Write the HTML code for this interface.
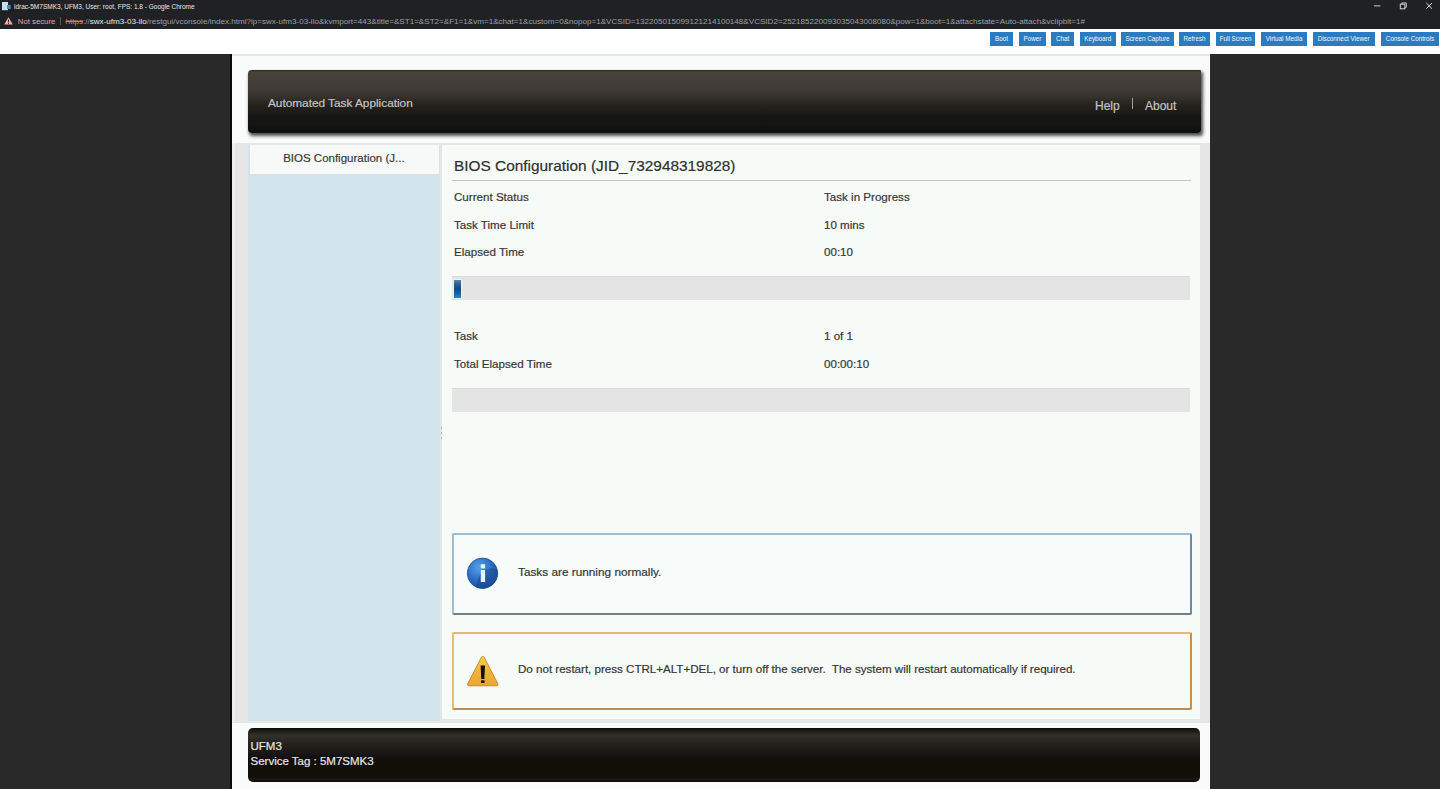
<!DOCTYPE html>
<html><head><meta charset="utf-8">
<style>
*{margin:0;padding:0;box-sizing:border-box}
html,body{width:1440px;height:789px;overflow:hidden;background:#292929;font-family:"Liberation Sans",sans-serif}
.abs{position:absolute}
#chrome{left:0;top:0;width:1440px;height:29px;background:#202124}
#titletxt{left:14px;top:2px;font-size:6.5px;color:#e8eaed;white-space:pre;line-height:9px}
#urlrow{left:0;top:15px;height:14px;width:1440px}
.url{font-size:7px;white-space:pre;line-height:14px;top:0}
#toolbar{left:0;top:29px;width:1440px;height:25px;background:#fff}
.btn{top:32px;height:14px;background:#2a7bc1;color:#f4f9ff;font-size:6.3px;line-height:14px;text-align:center;white-space:pre}
#console{left:232px;top:54px;width:978px;height:735px;background:#f8fbf9}
#lborder{left:230px;top:54px;width:2px;height:735px;background:#0a0a0a}
#header{left:247.5px;top:69.5px;width:953px;height:63.5px;border-radius:4px 1px 3px 4px;
 background:linear-gradient(to bottom,#2a2622 0,#4a4238 3%,#46403a 14%,#403c37 28%,#38342f 40%,#2c2824 50%,#231f1b 60%,#1e1a15 68%,#171617 73%,#111516 77%,#1a1612 84%,#121213 90%,#0d0e0e 100%);
 box-shadow:1.5px 2.5px 3.5px rgba(0,0,0,0.7)}
.htxt{color:#c4c4c4;font-size:11.8px;white-space:pre;-webkit-text-stroke:0.2px #c4c4c4}
#band{left:232px;top:143px;width:978px;height:580px;background:#e6e6e6}
#sidebar{left:248.3px;top:144.5px;width:191.3px;height:576.5px;background:#d3e5ec}
#tab{left:249.7px;top:144.5px;width:189.6px;height:30px;border-bottom:1px solid #d9e0e2;background:#f6f9f7;color:#3a3a3a;font-size:11.5px;text-align:center;line-height:27px;padding-right:1.2px;-webkit-text-stroke:0.2px #3a3a3a}
#content{left:442px;top:145px;width:758px;height:574px;background:#f7fbf8}
#title{left:454px;top:157.3px;font-size:15.4px;color:#303030;white-space:pre;-webkit-text-stroke:0.2px #303030}
#uline{left:452px;top:180.2px;width:739px;height:1.2px;background:#c3c5c5}
.lbl{font-size:11.6px;color:#363636;white-space:pre;-webkit-text-stroke:0.2px #363636}
.bar{left:452px;width:738px;height:23.5px;background:#e4e4e4;border-top:1.5px solid #dadada}
#footer{left:247.5px;top:728px;width:952.5px;height:54.2px;border-radius:5px;
 background:linear-gradient(to bottom,#0a0a08 0,#1a1815 4%,#33302b 14%,#22211e 30%,#1c1a12 43%,#15141a 50%,#110f08 58%,#110f08 91%,#1a1913 95%,#080806 100%)}
.ftxt{color:#e6e6e6;font-size:11.5px;white-space:pre;-webkit-text-stroke:0.2px #e6e6e6}
#info{left:452px;top:533px;width:739.5px;height:81.5px;border:2px solid #9fbcd5;border-right-color:#6a8cab;border-bottom-color:#6e808c;border-radius:2px;background:#f7fbf9}
#warn{left:452px;top:631.5px;width:739.5px;height:78.5px;border:2px solid #ebb86d;border-right-color:#c98f4c;border-bottom-color:#c08c4e;border-radius:2px;background:#f7fbf8}
</style></head><body>
<div id="chrome" class="abs"></div>
<svg class="abs" style="left:1px;top:1px" width="11" height="11" viewBox="0 0 11 11"><rect x="0" y="0" width="11" height="11" fill="#18212c"/><rect x="1" y="1" width="6" height="8.2" fill="#bfe3f1"/><rect x="6" y="4" width="3.6" height="4" fill="#5d86a6"/></svg>
<div id="titletxt" class="abs">idrac-5M7SMK3, UFM3, User: root, FPS: 1.8 - Google Chrome</div>
<svg class="abs" style="left:4px;top:17px" width="9" height="8" viewBox="0 0 9 8"><path d="M4.5 0.3 L8.8 7.6 L0.2 7.6 Z" fill="#f2a9a9"/><rect x="4" y="2.6" width="1" height="2.6" fill="#3a1f1f"/><rect x="4" y="5.8" width="1" height="1" fill="#3a1f1f"/></svg>
<div class="abs" style="left:17.8px;top:15px;font-size:7.75px;line-height:14px;color:#e9a3a0;white-space:pre">Not secure</div>
<div class="abs" style="left:60px;top:17px;width:1px;height:8px;background:#55585c"></div>
<div class="abs url" style="left:65.5px;top:15px;font-size:8.08px;color:#9aa0a6"><span style="color:#d77b77;text-decoration:line-through">https</span>://<span style="color:#e8eaed">swx-ufm3-03-ilo</span>/restgui/vconsole/index.html?ip=swx-ufm3-03-ilo&amp;kvmport=443&amp;title=&amp;ST1=&amp;ST2=&amp;F1=1&amp;vm=1&amp;chat=1&amp;custom=0&amp;nopop=1&amp;VCSID=132205015099121214100148&amp;VCSID2=252185220093035043008080&amp;pow=1&amp;boot=1&amp;attachstate=Auto-attach&amp;vclipbit=1#</div>
<svg class="abs" style="left:1368px;top:0px" width="72" height="14" viewBox="0 0 72 14"><rect x="6" y="5.4" width="6.3" height="1" fill="#d0d0d0"/><rect x="32.3" y="4.2" width="4.6" height="4.6" fill="none" stroke="#d4d4d4" stroke-width="1"/><path d="M33.8 4.2 V2.9 H38.3 V7.3 H36.9" fill="none" stroke="#d4d4d4" stroke-width="0.9"/><path d="M58.3 3 L64 8.7 M64 3 L58.3 8.7" stroke="#dcdcdc" stroke-width="1"/></svg>
<div id="toolbar" class="abs"></div>
<div class="abs btn" style="left:990.3px;width:22.6px">Boot</div>
<div class="abs btn" style="left:1019px;width:26.8px">Power</div>
<div class="abs btn" style="left:1051.4px;width:22.4px">Chat</div>
<div class="abs btn" style="left:1079.8px;width:35.8px">Keyboard</div>
<div class="abs btn" style="left:1121.2px;width:52.7px">Screen Capture</div>
<div class="abs btn" style="left:1179.4px;width:30.4px">Refresh</div>
<div class="abs btn" style="left:1215.8px;width:39.6px">Full Screen</div>
<div class="abs btn" style="left:1261.3px;width:45.6px">Virtual Media</div>
<div class="abs btn" style="left:1312.5px;width:62.3px">Disconnect Viewer</div>
<div class="abs btn" style="left:1381px;width:58px">Console Controls</div>
<div id="console" class="abs"></div>
<div id="lborder" class="abs"></div>
<div class="abs" style="left:232px;top:54px;width:978px;height:1.5px;background:#e3e7e5"></div>
<div id="header" class="abs"></div>
<div class="abs htxt" style="left:268px;top:96px">Automated Task Application</div>
<div class="abs htxt" style="left:1095px;top:99px;font-size:12px">Help</div>
<div class="abs htxt" style="left:1145px;top:99px;font-size:12px">About</div>
<div class="abs" style="left:1132.1px;top:98px;width:1px;height:11.4px;background:#a0a0a0"></div>
<div id="band" class="abs"></div>
<div class="abs" style="left:232px;top:143px;width:2.5px;height:579px;background:#eeeeee"></div>
<div id="sidebar" class="abs"></div>
<div id="tab" class="abs">BIOS Configuration (J...</div>
<div id="content" class="abs"></div>
<div class="abs" style="left:440.5px;top:427px;width:1.5px;height:1.5px;background:#ababab;border-radius:1px"></div>
<div class="abs" style="left:440.5px;top:432px;width:1.5px;height:1.5px;background:#ababab;border-radius:1px"></div>
<div class="abs" style="left:440.5px;top:437px;width:1.5px;height:1.5px;background:#ababab;border-radius:1px"></div>
<div id="title" class="abs">BIOS Configuration (JID_732948319828)</div>
<div id="uline" class="abs"></div>
<div class="abs lbl" style="left:454px;top:189.8px">Current Status</div>
<div class="abs lbl" style="left:824px;top:189.8px">Task in Progress</div>
<div class="abs lbl" style="left:454px;top:217.8px">Task Time Limit</div>
<div class="abs lbl" style="left:824px;top:217.8px">10 mins</div>
<div class="abs lbl" style="left:454px;top:244.8px">Elapsed Time</div>
<div class="abs lbl" style="left:824px;top:244.8px">00:10</div>
<div class="abs bar" style="top:276px"></div>
<div class="abs" style="left:454px;top:280px;width:7.1px;height:17.5px;box-shadow:0 0 0 1px #e4f4fc;background:linear-gradient(to bottom,#5f80a3 0,#2a5f92 25%,#0d4a82 50%,#1866a6 78%,#3185c4 100%)"></div>
<div class="abs lbl" style="left:454px;top:328.8px">Task</div>
<div class="abs lbl" style="left:824px;top:328.8px">1 of 1</div>
<div class="abs lbl" style="left:454px;top:356.8px">Total Elapsed Time</div>
<div class="abs lbl" style="left:824px;top:356.8px">00:00:10</div>
<div class="abs bar" style="top:388px"></div>
<div id="info" class="abs"></div>
<svg class="abs" style="left:466px;top:557px" width="33" height="33" viewBox="0 0 33 33">
<defs><radialGradient id="ig" cx="0.38" cy="0.3" r="0.75"><stop offset="0" stop-color="#5aa0e8"/><stop offset="0.5" stop-color="#2f74c8"/><stop offset="1" stop-color="#16479a"/></radialGradient>
<linearGradient id="ig2" x1="0" y1="0" x2="0" y2="1"><stop offset="0" stop-color="#1a4f9a" stop-opacity="0"/><stop offset="1" stop-color="#123d80" stop-opacity="0.6"/></linearGradient></defs>
<circle cx="16.5" cy="16.3" r="15.2" fill="url(#ig)" stroke="#1f4f90" stroke-width="0.8"/>
<path d="M16.5 14 Q26 9 31.5 13.5 A15.2 15.2 0 0 1 10 30 Q12 20 16.5 14Z" fill="#1a4a8e" opacity="0.55"/>
<rect x="14.8" y="7.2" width="4.3" height="4.2" fill="#e9f3ff"/>
<rect x="14.8" y="13" width="4.3" height="12" fill="#e9f3ff"/>
</svg>
<div class="abs lbl" style="left:518px;top:565.1px;font-size:11.8px">Tasks are running normally.</div>
<div id="warn" class="abs"></div>
<svg class="abs" style="left:466px;top:654px" width="34" height="34" viewBox="0 0 34 34">
<defs><linearGradient id="wg" x1="0" y1="0" x2="0" y2="1"><stop offset="0" stop-color="#f3d54a"/><stop offset="0.5" stop-color="#f0b43a"/><stop offset="1" stop-color="#e9a830"/></linearGradient></defs>
<path d="M16.8 2.3 Q17.6 2.3 18 3 L32 30 Q32.3 31.8 30.6 31.8 L2.9 31.8 Q1.3 31.8 1.6 30 L15.6 3 Q16 2.3 16.8 2.3Z" fill="url(#wg)" stroke="#c58a3a" stroke-width="1"/>
<path d="M14.6 11.5 L19 11.5 L18.3 25 L15.3 25Z" fill="#111"/>
<rect x="15" y="26.3" width="3.6" height="2.8" rx="1.2" fill="#111"/>
</svg>
<div class="abs lbl" style="left:518px;top:661.9px;letter-spacing:-0.01px">Do not restart, press CTRL+ALT+DEL, or turn off the server.  The system will restart automatically if required.</div>
<div id="footer" class="abs"></div>
<div class="abs ftxt" style="left:250.5px;top:739.5px">UFM3</div>
<div class="abs ftxt" style="left:250.5px;top:754.6px">Service Tag : 5M7SMK3</div>
</body></html>
